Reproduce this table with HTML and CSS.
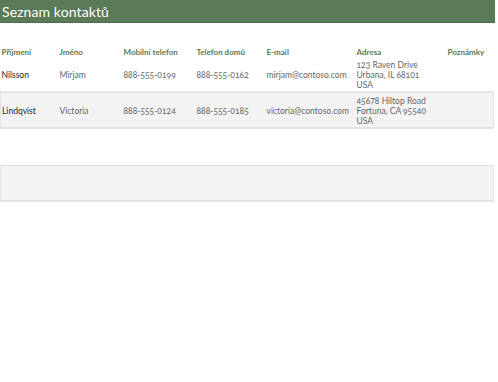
FILE: index.html
```html
<!DOCTYPE html>
<html lang="cs">
<head>
<meta charset="utf-8">
<title>Seznam kontaktů</title>
<link rel="stylesheet" href="styles.css">
</head>
<body>
<div class="page">
  <div class="title">Seznam kontaktů</div>
  <table class="contacts">
    <colgroup>
      <col class="c1"><col class="c2"><col class="c3"><col class="c4"><col class="c5"><col class="c6"><col class="c7">
    </colgroup>
    <thead>
      <tr>
        <th>Příjmení</th><th>Jméno</th><th>Mobilní telefon</th><th>Telefon domů</th><th>E-mail</th><th>Adresa</th><th>Poznámky</th>
      </tr>
    </thead>
    <tbody>
      <tr>
        <td class="last">Nilsson</td><td>Mirjam</td><td>888-555-0199</td><td>888-555-0162</td><td>mirjam@contoso.com</td>
        <td class="addr">123 Raven Drive<br>Urbana, IL 68101<br>USA</td><td></td>
      </tr>
      <tr class="alt">
        <td class="last">Lindqvist</td><td>Victoria</td><td>888-555-0124</td><td>888-555-0185</td><td>victoria@contoso.com</td>
        <td class="addr">45678 Hiltop Road<br>Fortuna, CA 95540<br>USA</td><td></td>
      </tr>
      <tr>
        <td></td><td></td><td></td><td></td><td></td><td></td><td></td>
      </tr>
      <tr class="alt">
        <td></td><td></td><td></td><td></td><td></td><td></td><td></td>
      </tr>
    </tbody>
  </table>
</div>
</body>
</html>
```

FILE: styles.css
```css
html, body {
  margin: 0;
  padding: 0;
  background: #ffffff;
}
body {
  font-family: Lato, "Open Sans", "Noto Sans", sans-serif;
  font-variant-numeric: oldstyle-nums;
}
.page {
  width: 495px;
}
.title {
  height: 22px;
  border-bottom: 1px solid #4c6b4b;
  background: #5a7a58;
  color: #ffffff;
  font-size: 14px;
  line-height: 23px;
  padding-left: 2px;
  letter-spacing: 0.1px;
}
.contacts {
  width: 493px;
  margin-top: 18px;
  border-collapse: collapse;
  table-layout: fixed;
}
.c1 { width: 58px; }
.c2 { width: 64px; }
.c3 { width: 73px; }
.c4 { width: 70px; }
.c5 { width: 90px; }
.c6 { width: 91px; }
.c7 { width: 47px; }
.contacts th {
  height: 16px;
  padding: 0 0 0 1px;
  vertical-align: bottom;
  text-align: left;
  font-size: 8px;
  line-height: 10px;
  font-weight: 700;
  color: #587a55;
  white-space: nowrap;
}
.contacts td {
  height: 34px;
  padding: 2px 0 0 1px;
  vertical-align: middle;
  font-size: 8.5px;
  line-height: 10px;
  color: #666666;
  white-space: nowrap;
  border-bottom: 1px solid #e3e3e3;
}
.contacts tbody tr:first-child td {
  border-bottom-width: 2px;
  height: 32px;
}
.contacts td.last {
  color: #262626;
}
.contacts tr.alt td {
  background: #f3f3f3;
  border-bottom: 2px solid #e3e3e3;
  height: 32px;
}
.contacts tr.alt td:first-child {
  border-left: 1px solid #e6e6e6;
}
.contacts tr.alt td:last-child {
  border-right: 1px solid #e6e6e6;
}
```
